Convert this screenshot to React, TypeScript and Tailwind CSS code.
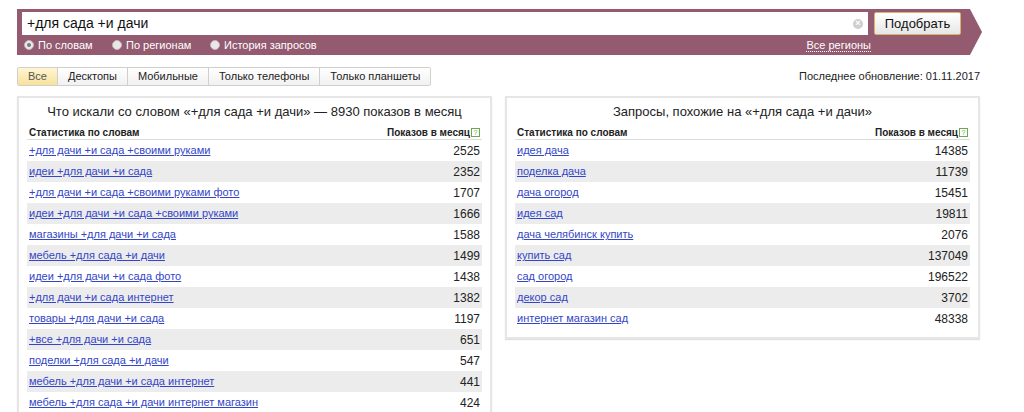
const leftRows: [string, string][] = [
  ["+для дачи +и сада +своими руками", "2525"],
  ["идеи +для дачи +и сада", "2352"],
  ["+для дачи +и сада +своими руками фото", "1707"],
  ["идеи +для дачи +и сада +своими руками", "1666"],
  ["магазины +для дачи +и сада", "1588"],
  ["мебель +для сада +и дачи", "1499"],
  ["идеи +для дачи +и сада фото", "1438"],
  ["+для дачи +и сада интернет", "1382"],
  ["товары +для дачи +и сада", "1197"],
  ["+все +для дачи +и сада", "651"],
  ["поделки +для сада +и дачи", "547"],
  ["мебель +для дачи +и сада интернет", "441"],
  ["мебель +для сада +и дачи интернет магазин", "424"],
];

const rightRows: [string, string][] = [
  ["идея дача", "14385"],
  ["поделка дача", "11739"],
  ["дача огород", "15451"],
  ["идея сад", "19811"],
  ["дача челябинск купить", "2076"],
  ["купить сад", "137049"],
  ["сад огород", "196522"],
  ["декор сад", "3702"],
  ["интернет магазин сад", "48338"],
];

const tabs = ["Все", "Десктопы", "Мобильные", "Только телефоны", "Только планшеты"];

function Radio({ label, checked, className = "" }: { label: string; checked?: boolean; className?: string }) {
  return (
    <label className={`flex items-center gap-[4px] text-[11px] text-white ${className}`}>
      <span className="flex h-[10px] w-[10px] items-center justify-center rounded-full bg-[#e8e8e8] border border-[#c9b3bb]">
        {checked && <span className="h-[4px] w-[4px] rounded-full bg-[#7a7a7a]" />}
      </span>
      {label}
    </label>
  );
}

function StatsTable({ title, rows }: { title: string; rows: [string, string][] }) {
  return (
    <div className="w-[475px] border-2 border-[#e6e6e6] bg-white px-[8px] pt-[6px] pb-[8px] shadow-[0_1px_1px_rgba(0,0,0,0.12)]">
      <div className="text-center text-[13px] leading-[16px] text-[#222]">{title}</div>
      <div className="mt-[6px] flex items-end justify-between border-b border-[#dcdcdc] px-[2px] text-[10px] font-bold leading-[13px] text-[#222]">
        <span>Статистика по словам</span>
        <span className="flex items-center gap-[1px]">
          Показов в месяц
          <span className="flex h-[9px] w-[9px] items-center justify-center border border-[#6aab4a] bg-white text-[7px] leading-none font-normal text-[#6aab4a]">
            ?
          </span>
        </span>
      </div>
      {rows.map(([q, n], i) => (
        <div
          key={q}
          className={`flex h-[21px] items-center justify-between px-[2px] text-[11px] ${
            i % 2 === 1 ? "bg-[#ececec]" : "bg-white"
          }`}
        >
          <a className="text-[#3346c8] underline underline-offset-1">{q}</a>
          <span className="text-[12px] text-[#222]">{n}</span>
        </div>
      ))}
    </div>
  );
}

export default function App() {
  return (
    <div
      className="min-h-[412px] w-[1024px] overflow-hidden bg-white px-[17px] pt-[9px]"
      style={{ fontFamily: '"Liberation Sans", Arial, sans-serif' }}
    >
      {/* search band */}
      <div className="flex">
        <div className="flex h-[46px] w-[953px] flex-col bg-[#935a70] pl-[5px] pr-[9px] pt-[3px]">
          <div className="flex h-[23px] items-stretch gap-[6px]">
            <div className="flex flex-1 items-center bg-white pl-[5px] pr-[5px]">
              <span className="flex-1 text-[14px] text-[#111]">+для сада +и дачи</span>
              <span className="flex h-[10px] w-[10px] items-center justify-center rounded-full bg-[#cfcfcf] text-[9px] leading-none font-bold text-white">
                ×
              </span>
            </div>
            <button className="w-[87px] rounded-[2px] border border-[#d8b56a] bg-gradient-to-b from-white to-[#e6e6e6] text-[13px] text-[#111]">
              Подобрать
            </button>
          </div>
          <div className="flex flex-1 items-center pl-[2px] pr-[90px]">
            <div className="flex items-center">
              <Radio label="По словам" checked className="w-[88px]" />
              <Radio label="По регионам" className="w-[98px]" />
              <Radio label="История запросов" />
            </div>
            <span className="ml-auto border-b border-dotted border-white text-[11px] leading-[12px] text-white">
              Все регионы
            </span>
          </div>
        </div>
        <div className="h-0 w-0 border-y-[23px] border-l-[12px] border-y-transparent border-l-[#935a70]" />
      </div>

      {/* tabs */}
      <div className="mt-[12px] flex items-center justify-between pr-[27px]">
        <div className="flex h-[19px] overflow-hidden rounded-[2px] border border-[#cfcfcf] text-[11px] text-[#222]">
          {tabs.map((t, i) => (
            <span
              key={t}
              className={`flex items-center px-[10px] ${i > 0 ? "border-l border-[#cfcfcf]" : ""} ${
                i === 0
                  ? "bg-gradient-to-b from-[#fff6d2] to-[#f7e29b] text-[#555]"
                  : "bg-gradient-to-b from-white to-[#f1f1f1]"
              }`}
            >
              {t}
            </span>
          ))}
        </div>
        <span className="text-[11px] text-[#222]">Последнее обновление: 01.11.2017</span>
      </div>

      {/* panels */}
      <div className="mt-[10px] flex items-start gap-[13px]">
        <StatsTable title="Что искали со словом «+для сада +и дачи» — 8930 показов в месяц" rows={leftRows} />
        <StatsTable title="Запросы, похожие на «+для сада +и дачи»" rows={rightRows} />
      </div>
    </div>
  );
}
